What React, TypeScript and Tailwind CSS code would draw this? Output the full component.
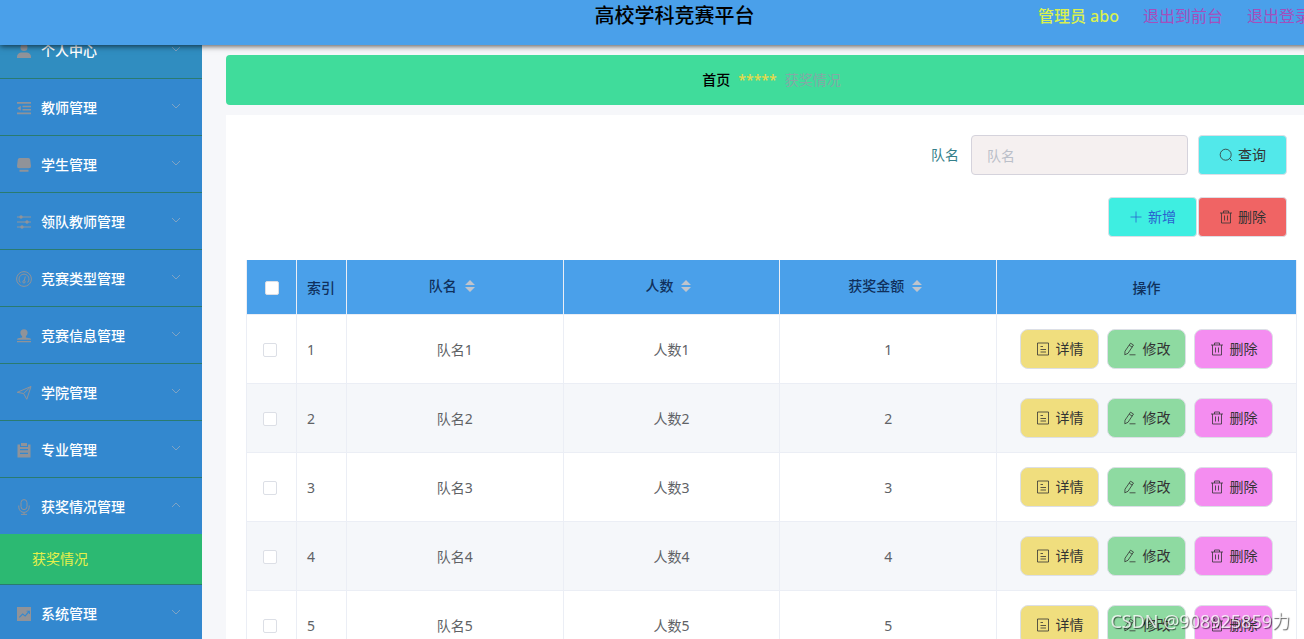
import type { ReactNode } from 'react';

type MenuItem = {
  label: string;
  icon: ReactNode;
  highlighted?: boolean;
  children?: string[];
};

const menu: MenuItem[] = [
  {
    label: '个人中心',
    highlighted: true,
    icon: (
      <g fill="currentColor">
        <circle cx="8" cy="4.5" r="3.5" />
        <path d="M1 15v-1.200c0-2.400 1.500-3.800 4-4.300h6c2.500.500 4 1.900 4 4.300V15z" />
      </g>
    ),
  },
  {
    label: '教师管理',
    icon: (
      <g fill="currentColor">
        <path d="M1 2h14v1.800H1zM6.500 5.700H15v1.600H6.500zM6.500 9H15v1.600H6.500zM1 12.500h14v1.800H1zM4.800 5.700v5L1.300 8.200z" />
      </g>
    ),
  },
  {
    label: '学生管理',
    icon: (
      <g fill="currentColor">
        <path d="M3.500 1h9a2 2 0 0 1 1.700 1.600l.8 6.400a2 2 0 0 1-2 2.200H3A2 2 0 0 1 1 9l.8-6.400A2 2 0 0 1 3.500 1zM3.500 12.800h9v2h-9z" />
      </g>
    ),
  },
  {
    label: '领队教师管理',
    icon: (
      <g fill="currentColor">
        <path d="M1 2.500h14v1H1zM1 7.500h14v1H1zM1 12.500h14v1H1z" />
        <circle cx="5" cy="3" r="1.700" />
        <circle cx="11" cy="8" r="1.700" />
        <circle cx="6" cy="13" r="1.700" />
      </g>
    ),
  },
  {
    label: '竞赛类型管理',
    icon: (
      <g fill="none" stroke="currentColor">
        <circle cx="8" cy="8" r="7.400" />
        <path d="M4.300 11.500a5 5 0 1 1 7.400 0" />
        <path d="M9.300 5.500 8.300 9.500" />
        <circle cx="8" cy="10.800" r="1.200" />
      </g>
    ),
  },
  {
    label: '竞赛信息管理',
    icon: (
      <g fill="currentColor">
        <path d="M8 1.200c2.300 0 3.600 1.500 3.600 3.500 0 1.600-.8 2.600-1.700 3.500v1.300l4 .8c.7.200 1.100.6 1.100 1.500H1c0-.9.4-1.300 1.100-1.500l4-.8V8.200c-.9-.9-1.700-1.900-1.700-3.500 0-2 1.300-3.500 3.600-3.500zM1 13h14v1.300H1z" />
      </g>
    ),
  },
  {
    label: '学院管理',
    icon: (
      <path
        d="M15 1.500 1.200 7.300l6.400 1.200 3.200 5.800zM7.600 8.500 15 1.500"
        fill="none"
        stroke="currentColor"
        strokeLinejoin="round"
      />
    ),
  },
  {
    label: '专业管理',
    icon: (
      <path
        fillRule="evenodd"
        fill="currentColor"
        d="M1.500 2.500H4V5h8V2.500h2.500V15.500h-13zM5 1h6v3H5zM4 7v1.200h8V7zM4 10.800V12h8v-1.200z"
      />
    ),
  },
  {
    label: '获奖情况管理',
    icon: (
      <g fill="none" stroke="currentColor">
        <rect x="5" y=".6" width="6" height="10" rx="3" />
        <path d="M2.800 6.500v1.700a5.200 5.200 0 0 0 10.400 0V6.500M8 13.400v2M5 15.400h6" />
      </g>
    ),
    children: ['获奖情况'],
  },
  {
    label: '系统管理',
    icon: (
      <path
        fillRule="evenodd"
        fill="currentColor"
        d="M1 1h14v14H1zM3 11l.7.7 3-3 2.500 2 3.800-4.300V8h.9V4.700h-3.300v.9h1.500L9 9.200l-2.400-2z"
      />
    ),
  },
];

const rows = [1, 2, 3, 4, 5].map((n) => ({
  id: n,
  team: `队名${n}`,
  people: `人数${n}`,
  amount: n,
}));

function Icon({ children }: { children: ReactNode }) {
  return (
    <svg viewBox="0 0 14 14" className="size-3.5 shrink-0" fill="none" stroke="currentColor" strokeWidth="0.8">
      {children}
    </svg>
  );
}

function TrashIcon() {
  return (
    <Icon>
      <path d="M1 3h12M4.500 3V1h5v2M2.500 3v10h9V3M5.500 5.500v5M8.500 5.500v5" />
    </Icon>
  );
}

function DetailIcon() {
  return (
    <Icon>
      <path d="M1.500 1h11v12h-11zM4.500 4.500H7M4.500 7.500h5.500M4.500 10h5.500" />
    </Icon>
  );
}

function EditIcon() {
  return (
    <Icon>
      <path d="M7.500 1.200 10.500 3 5 11.300l-3.200 1.500.2-3.600zM6.200 3.200l3 1.900M6.500 12.800H12.500" />
    </Icon>
  );
}

function SearchIcon() {
  return (
    <Icon>
      <circle cx="6.700" cy="6.700" r="5.500" />
      <path d="m10.500 10.500 2.300 2.300" />
    </Icon>
  );
}

function PlusIcon() {
  return (
    <Icon>
      <path d="M7 1.500v11M1.500 7h11" />
    </Icon>
  );
}

function Chevron({ up }: { up?: boolean }) {
  return (
    <svg viewBox="0 0 10 10" className="mb-1 size-2.5 text-[#7fa3c4]" fill="none" stroke="currentColor">
      <path d={up ? 'M1 7l4-4 4 4' : 'M1 3l4 4 4-4'} />
    </svg>
  );
}

function SortableHeader({ label }: { label: string }) {
  return (
    <th className="border-r border-b border-[#ebeef5] pr-1.5 pb-0.5 font-medium">
      <button type="button" className="inline-flex items-center gap-2">
        {label}
        <svg viewBox="0 0 10 12" className="h-3 w-2.5 fill-[#c0c4cc]">
          <path d="M5 0l5 5H0zM5 12l5-5H0z" />
        </svg>
      </button>
    </th>
  );
}

function Sidebar() {
  return (
    <nav className="w-[202px] shrink-0 bg-[#3388cf] text-sm font-medium text-white">
      {/* the list is scrolled slightly under the header */}
      <ul className="-mt-[23px]">
        {menu.map((item) => (
          <li key={item.label} className="border-b border-[#2a7b70]">
            <button
              type="button"
              className={`flex h-14 w-full items-center pt-0.5 pr-[21px] pl-4 text-left ${
                item.highlighted ? 'bg-[#308dc0]' : ''
              }`}
            >
              <svg viewBox="0 0 16 16" className="mr-[9px] size-4 text-[#909399]">
                {item.icon}
              </svg>
              <span className="flex-1">{item.label}</span>
              <Chevron up={!!item.children} />
            </button>
            {item.children?.map((child) => (
              <a
                key={child}
                href="#"
                className="flex h-[50px] items-center bg-[#2cb972] pl-8 font-normal text-[#e6f04a]"
              >
                {child}
              </a>
            ))}
          </li>
        ))}
      </ul>
    </nav>
  );
}

function RowActions() {
  const base = 'flex h-10 w-[79px] items-center justify-center gap-1.5 rounded-lg border border-[#dcdfe6]';
  return (
    <div className="flex justify-center gap-2 text-[#333]">
      <button type="button" className={`${base} bg-[#f0de7e]`}>
        <DetailIcon />
        详情
      </button>
      <button type="button" className={`${base} bg-[#8edaa1]`}>
        <EditIcon />
        修改
      </button>
      <button type="button" className={`${base} bg-[#f48df0]`}>
        <TrashIcon />
        删除
      </button>
    </div>
  );
}

function AwardTable() {
  const cell = 'h-[69px] border-r border-b border-[#ebeef5]';
  const box = 'block size-3.5 appearance-none rounded-xs border border-[#dcdfe6] bg-white';
  return (
    <table className="w-full table-fixed border-separate border-spacing-0 border-l border-[#ebeef5] text-center text-sm text-[#606266]">
      <colgroup>
        <col className="w-[50px]" />
        <col className="w-[50px]" />
        <col />
        <col />
        <col />
        <col className="w-[300px]" />
      </colgroup>
      <thead className="bg-[#4aa0ea] text-[#10305c]">
        <tr>
          <th className="h-[55px] border-r border-b border-[#ebeef5] pt-0.5 pl-[18px]">
            <input type="checkbox" aria-label="全选" className={box} />
          </th>
          <th className="border-r border-b border-[#ebeef5] pt-0.5 pl-2.5 text-left font-medium">索引</th>
          <SortableHeader label="队名" />
          <SortableHeader label="人数" />
          <SortableHeader label="获奖金额" />
          <th className="border-r border-b border-[#ebeef5] pt-0.5 font-medium">操作</th>
        </tr>
      </thead>
      <tbody>
        {rows.map((row) => (
          <tr key={row.id} className="even:bg-[#f5f7fa]">
            <td className={`${cell} pt-0.5 pl-4`}>
              <input type="checkbox" aria-label={row.team} className={box} />
            </td>
            <td className={`${cell} pt-0.5 pl-2.5 text-left`}>{row.id}</td>
            <td className={`${cell} pt-0.5`}>{row.team}</td>
            <td className={`${cell} pt-0.5`}>{row.people}</td>
            <td className={`${cell} pt-0.5`}>{row.amount}</td>
            <td className={cell}>
              <RowActions />
            </td>
          </tr>
        ))}
      </tbody>
    </table>
  );
}

export default function App() {
  const toolButton = 'flex h-10 items-center gap-[5px] rounded border border-[#dcdfe6] px-5';
  return (
    <div className="h-screen overflow-hidden bg-[#f6f7fa] font-['Noto_Sans','Noto_Sans_CJK_SC',sans-serif] text-sm">
      {/* content runs a little wider than the window */}
      <div className="flex h-full w-[calc(100%+45px)] flex-col">
        <header className="relative z-10 grid h-[45px] shrink-0 grid-cols-[1fr_auto_1fr] bg-[#4aa0ea] shadow-[0_1px_6px_rgba(0,0,0,0.7)]">
          <h1 className="col-start-2 text-xl leading-8 font-medium text-black">高校学科竞赛平台</h1>
          <div className="flex justify-end gap-6 pr-[38px] text-base leading-8">
            <span className="font-medium text-[#d9f04f]">管理员 abo</span>
            <a href="#" className="text-[#a34fbd]">退出到前台</a>
            <a href="#" className="text-[#a34fbd]">退出登录</a>
          </div>
        </header>

        <div className="flex min-h-0 flex-1 overflow-hidden">
          <Sidebar />
          <main className="flex min-w-0 flex-1 flex-col gap-2.5 pt-2.5 pr-8 pl-6">
            <div className="flex h-[50px] shrink-0 items-center justify-center gap-2 rounded bg-[#40dc9b]">
              <a href="#" className="font-medium text-black">首页</a>
              <span className="font-medium text-[#e8d94a]">*****</span>
              <span className="text-[#84a9a6]">获奖情况</span>
            </div>

            <section className="bg-white p-5">
              <form className="flex items-center justify-end pr-2.5" onSubmit={(e) => e.preventDefault()}>
                <label htmlFor="team" className="pr-3 text-[#35808a]">队名</label>
                <input
                  id="team"
                  type="text"
                  placeholder="队名"
                  className="mr-2.5 h-10 w-[217px] rounded border border-[#d5d3dc] bg-[#f5f0f0] px-[15px] placeholder:text-[#bbbfc9]"
                />
                <button type="submit" className={`${toolButton} bg-[#52e8ea] text-[#333]`}>
                  <SearchIcon />
                  查询
                </button>
              </form>
              <div className="mt-[22px] mb-[23px] flex justify-end gap-px pr-2.5">
                <button type="button" className={`${toolButton} bg-[#3eeee1] text-[#2a62cf]`}>
                  <PlusIcon />
                  新增
                </button>
                <button type="button" className={`${toolButton} bg-[#f06464] text-[#333]`}>
                  <TrashIcon />
                  删除
                </button>
              </div>
              <AwardTable />
            </section>
          </main>
        </div>
      </div>

      <div className="pointer-events-none fixed right-3.5 bottom-1.5 z-20 text-lg leading-6 text-white/80 [text-shadow:1px_1px_1px_rgba(0,0,0,0.6)]">
        CSDN @908925859力
      </div>
    </div>
  );
}
